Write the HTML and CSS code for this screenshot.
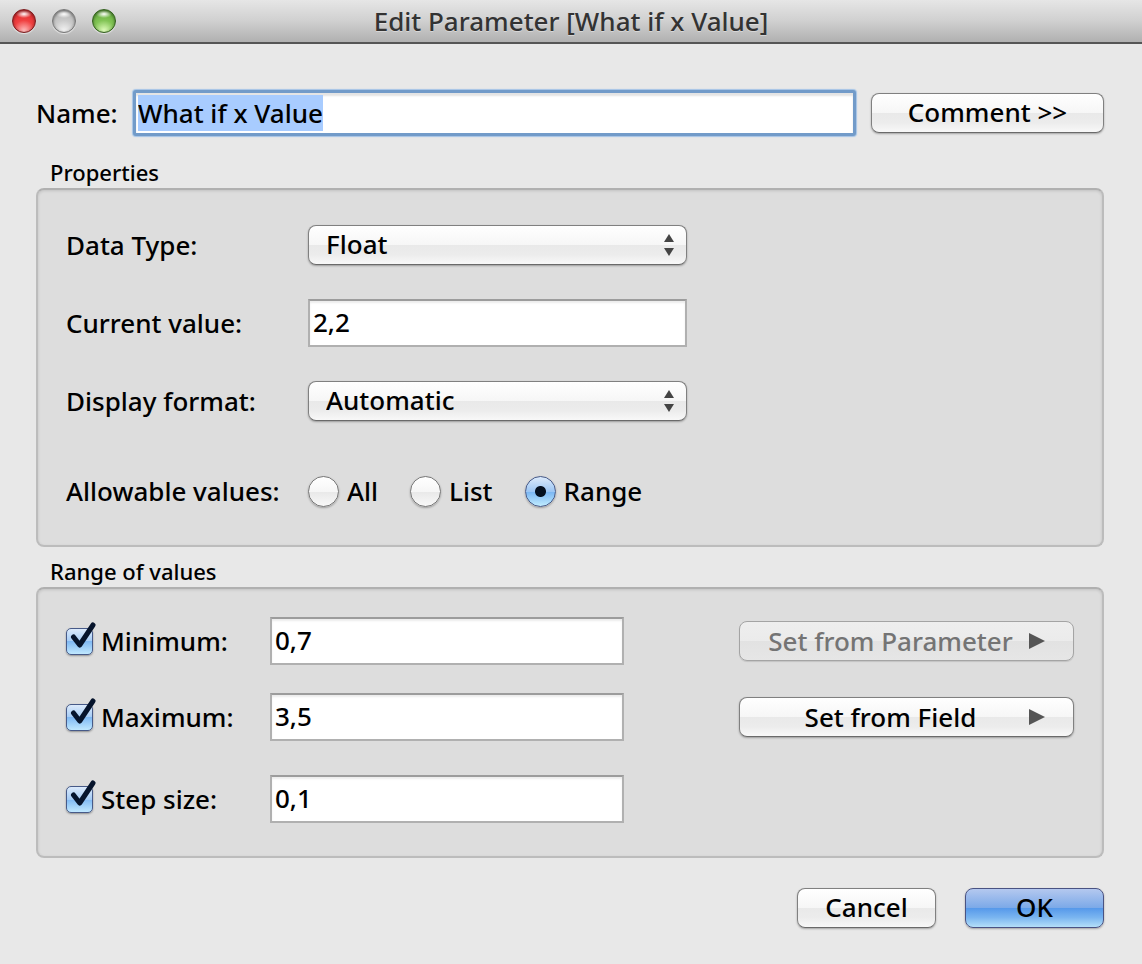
FILE: index.html
```html
<!DOCTYPE html>
<html lang="en">
<head>
<meta charset="utf-8">
<title>Edit Parameter [What if x Value]</title>
<meta name="viewport" content="width=device-width, initial-scale=1">
<link rel="stylesheet" href="styles.css">
</head>
<body>
<div class="window">
  <header class="titlebar">
    <div class="lights">
      <button type="button" class="light light-close" aria-label="Close"></button>
      <button type="button" class="light light-minimize" aria-label="Minimize" disabled></button>
      <button type="button" class="light light-zoom" aria-label="Zoom"></button>
    </div>
    <h1 class="title">Edit Parameter [What if x Value]</h1>
  </header>

  <form class="content">
    <div class="name-row">
      <label class="name-label" for="name">Name:</label>
      <input class="field field-focus" id="name" type="text" value="What if x Value" autocomplete="off" spellcheck="false" autofocus>
      <button class="button button-comment" type="button">Comment &gt;&gt;</button>
    </div>

    <section class="group" aria-labelledby="properties-title">
      <h2 class="group-title" id="properties-title">Properties</h2>
      <div class="panel">
        <div class="property">
          <label for="type">Data Type:</label>
          <span class="popup">
            <select class="select" id="type"><option>Float</option></select>
            <svg class="popup-arrows" viewBox="0 0 10 22" aria-hidden="true"><path d="M5 0l5 8H0zM5 22l5-8H0z"/></svg>
          </span>
        </div>
        <div class="property">
          <label for="current">Current value:</label>
          <input class="field" id="current" type="text" value="2,2">
        </div>
        <div class="property">
          <label for="format">Display format:</label>
          <span class="popup">
            <select class="select" id="format"><option>Automatic</option></select>
            <svg class="popup-arrows" viewBox="0 0 10 22" aria-hidden="true"><path d="M5 0l5 8H0zM5 22l5-8H0z"/></svg>
          </span>
        </div>
        <div class="property property-radios" role="radiogroup" aria-labelledby="allowable">
          <span id="allowable">Allowable values:</span>
          <div class="radios">
            <label class="choice"><input class="radio" type="radio" name="allow">All</label>
            <label class="choice"><input class="radio" type="radio" name="allow">List</label>
            <label class="choice"><input class="radio" type="radio" name="allow" checked>Range</label>
          </div>
        </div>
      </div>
    </section>

    <section class="group" aria-labelledby="range-title">
      <h2 class="group-title" id="range-title">Range of values</h2>
      <div class="panel panel-range">
        <div class="bound">
          <label class="choice"><span class="tick"><input class="checkbox" type="checkbox" checked><svg class="tick-mark" viewBox="0 0 30 32" aria-hidden="true"><path d="M7.5 15l6.2 8L27 3"/></svg></span>Minimum:</label>
          <input class="field" type="text" value="0,7" aria-label="Minimum value">
          <button class="button button-menu" type="button" disabled><span class="menu-text">Set from Parameter</span><svg class="menu-arrow" viewBox="0 0 16 16" aria-hidden="true"><path d="M0 0l16 8-16 8z"/></svg></button>
        </div>
        <div class="bound">
          <label class="choice"><span class="tick"><input class="checkbox" type="checkbox" checked><svg class="tick-mark" viewBox="0 0 30 32" aria-hidden="true"><path d="M7.5 15l6.2 8L27 3"/></svg></span>Maximum:</label>
          <input class="field" type="text" value="3,5" aria-label="Maximum value">
          <button class="button button-menu" type="button"><span class="menu-text">Set from Field</span><svg class="menu-arrow" viewBox="0 0 16 16" aria-hidden="true"><path d="M0 0l16 8-16 8z"/></svg></button>
        </div>
        <div class="bound bound-step">
          <label class="choice"><span class="tick"><input class="checkbox" type="checkbox" checked><svg class="tick-mark" viewBox="0 0 30 32" aria-hidden="true"><path d="M7.5 15l6.2 8L27 3"/></svg></span>Step size:</label>
          <input class="field" type="text" value="0,1" aria-label="Step size value">
        </div>
      </div>
    </section>

    <footer class="actions">
      <button class="button" type="button">Cancel</button>
      <button class="button button-default" type="submit">OK</button>
    </footer>
  </form>
</div>
<script src="main.js"></script>
</body>
</html>
```

FILE: styles.css
```css
* {
  box-sizing: border-box;
}

body {
  margin: 0;
  background: #e8e8e8;
  color: #000;
  font: 500 26px/32px "Noto Sans", "Open Sans", sans-serif;
}

input,
select,
button {
  margin: 0;
  color: inherit;
  font: inherit;
}

.window {
  min-height: 100vh;
}

/* Title bar */
.titlebar {
  display: grid;
  grid-template-columns: 1fr auto 1fr;
  align-items: center;
  height: 44px;
  padding: 0 12px;
  border-bottom: 2px solid #555;
  background: linear-gradient(#e6e6e6, #d0d0d0 50%, #b0b0b0);
}

.lights {
  display: flex;
  gap: 16px;
}

.light {
  width: 24px;
  height: 24px;
  padding: 0;
  border: 1px solid #666;
  border-radius: 50%;
  box-shadow: 0 1px 1px rgba(255, 255, 255, 0.6), inset 0 1px 3px rgba(0, 0, 0, 0.5);
}

.light-close {
  border-color: #7c1a1c;
  background: radial-gradient(ellipse 8px 4px at 50% 4px, #fff, transparent), radial-gradient(circle at 50% 95%, #ffc0c0, #f04040 45%, #e03034 80%);
}

.light-minimize {
  border-color: #777;
  background: radial-gradient(ellipse 8px 4px at 50% 4px, #fff, transparent), radial-gradient(circle at 50% 95%, #f4f4f4, #cacaca 45%, #b8b8b8 80%);
}

.light-zoom {
  border-color: #315f1c;
  background: radial-gradient(ellipse 8px 4px at 50% 4px, #fff, transparent), radial-gradient(circle at 50% 95%, #e4ffc0, #82c455 45%, #68b040 80%);
}

.title {
  margin: 0;
  color: #333;
  font-size: 26px;
  font-weight: 500;
  text-shadow: 0 1px 0 rgba(255, 255, 255, 0.4);
}

/* Shared controls */
.field {
  width: 100%;
  min-width: 0;
  height: 48px;
  padding: 0 3px 2px;
  border: 2px solid #b0b0b0;
  border-top-color: #9c9c9c;
  border-radius: 0;
  outline: none;
  background: #fff;
  box-shadow: inset 0 2px 2px #ececec;
}

.field-focus {
  height: 46px;
  padding: 0 2px;
  border: 3px solid #729bc9;
  border-radius: 3px;
  box-shadow: 0 0 1px 1px #a3c3e6, inset 0 3px 2px #e4e4e4;
}

.field::selection {
  background: #a8ccff;
  color: #000;
}

.button,
.select {
  height: 40px;
  border: 1px solid #808080;
  border-bottom-color: #6a6a6a;
  border-radius: 8px;
  background: linear-gradient(#fff, #f6f6f6 50%, #e9e9e9 50%, #ececec 75%, #f8f8f8);
  box-shadow: 0 1px 2px rgba(0, 0, 0, 0.3);
}

.button {
  min-width: 139px;
  padding: 0 16px 2px;
}

.button:disabled {
  border-color: #a4a4a4;
  background: linear-gradient(#eee, #ebebeb 50%, #e2e2e2 50%, #e6e6e6);
  box-shadow: 0 1px 1px rgba(0, 0, 0, 0.12);
  color: #747474;
}

.button-comment {
  flex: 0 0 233px;
}

.button-default {
  border-color: #4a5383;
  background: linear-gradient(#b4c8ef, #7ba9e8 50%, #5598ea 50%, #7ab5f0 75%, #b4dff8);
}

.button-menu {
  display: grid;
  grid-template-columns: 1fr 16px;
  align-items: center;
  gap: 16px;
  padding: 0 28px;
}

.menu-arrow {
  width: 16px;
  height: 16px;
  fill: #555;
}

.popup {
  display: grid;
  position: relative;
}

.select {
  width: 100%;
  padding: 0 32px 2px 17px;
  appearance: none;
}

.popup-arrows {
  position: absolute;
  top: 9px;
  right: 13px;
  width: 10px;
  height: 22px;
  fill: #444;
  pointer-events: none;
}

.choice {
  display: flex;
  align-items: center;
  gap: 8px;
}

.radio {
  width: 31px;
  height: 31px;
  border: 1px solid #777;
  border-radius: 50%;
  appearance: none;
  background: linear-gradient(#fff, #f6f6f6 50%, #e8e8e8 50%, #f8f8f8);
  box-shadow: 0 1px 2px rgba(0, 0, 0, 0.3);
}

.radio:checked {
  border-color: #475a88;
  background: radial-gradient(circle, #041020 5px, transparent 6px), linear-gradient(#dceafb, #9cc6f4 50%, #78b4f2 50%, #c0ecff);
}

.tick {
  display: grid;
  position: relative;
}

.checkbox {
  width: 27px;
  height: 27px;
  border: 1px solid #475a88;
  border-radius: 5px;
  appearance: none;
  background: linear-gradient(#dceafb, #a4cbf5 50%, #80b9f3 50%, #c0e8ff);
  box-shadow: 0 1px 2px rgba(0, 0, 0, 0.35);
}

.tick-mark {
  display: none;
  position: absolute;
  top: -6px;
  left: 0;
  width: 30px;
  height: 32px;
  fill: none;
  stroke: #06142c;
  stroke-linecap: round;
  stroke-linejoin: round;
  stroke-width: 5;
  pointer-events: none;
}

.checkbox:checked + .tick-mark {
  display: block;
}

/* Form layout */
.content {
  padding: 46px 38px 36px 36px;
}

.name-row {
  display: flex;
  align-items: center;
  gap: 15px;
}

.name-label {
  flex: 0 0 82px;
}

.group {
  margin-top: 22px;
}

.group + .group {
  margin-top: 10px;
}

.group-title {
  margin: 0;
  padding: 0 14px 2px;
  font-size: 22px;
  font-weight: 500;
  line-height: 28px;
}

.panel {
  display: flex;
  flex-direction: column;
  gap: 34px;
  padding: 35px 28px 38px;
  border: 2px solid #bcbcbc;
  border-top-color: #b0b0b0;
  border-radius: 8px;
  background: #ddd;
  box-shadow: inset 0 1px 3px rgba(0, 0, 0, 0.12);
}

.property {
  display: grid;
  grid-template-columns: 242px 379px;
  align-items: center;
}

.property-radios {
  margin-top: 20px;
}

.radios {
  display: flex;
  gap: 32px;
}

.panel-range {
  gap: 28px;
  padding: 28px 28px 33px;
}

.bound {
  display: grid;
  grid-template-columns: 204px 354px 335px;
  align-items: center;
}

.bound .button-menu {
  grid-column: 3;
}

@media (min-width: 1000px) {
  .bound {
    grid-template-columns: 204px 354px 1fr 335px;
  }

  .bound .button-menu {
    grid-column: 4;
  }
}

.bound-step {
  margin-top: 6px;
}

.actions {
  display: flex;
  justify-content: flex-end;
  gap: 29px;
  margin-top: 30px;
}
```

FILE: main.js
```js
const nameField = document.getElementById("name");
nameField.focus();
nameField.select();
```
